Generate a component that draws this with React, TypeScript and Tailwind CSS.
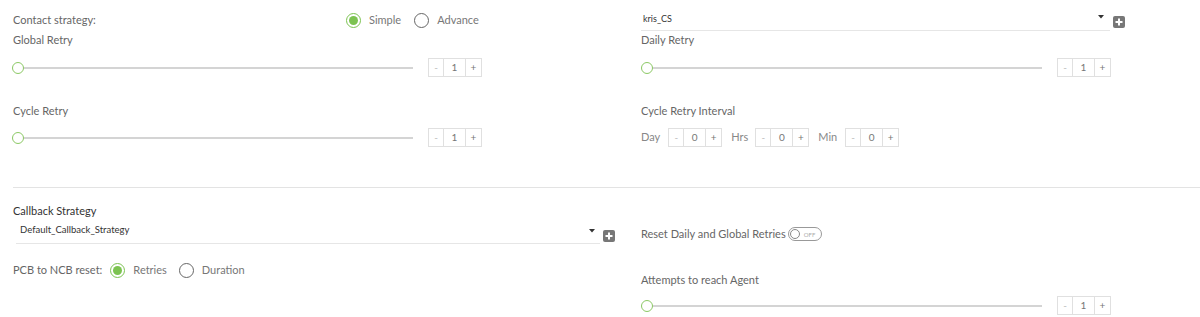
import React from "react";

const font = { fontFamily: "Lato, 'Open Sans', sans-serif" };

function Radio({ checked, label }: { checked?: boolean; label: string }) {
  return (
    <div className="flex items-center">
      <span
        className={`flex h-[15px] w-[15px] items-center justify-center rounded-full border-[1.5px] ${
          checked ? "border-[#7cc351]" : "border-[#666]"
        }`}
      >
        {checked && <span className="h-[9px] w-[9px] rounded-full bg-[#7cc351]" />}
      </span>
      <span className="ml-[8px] text-[11px] text-[#777]">{label}</span>
    </div>
  );
}

function Stepper({ value }: { value: number }) {
  return (
    <div className="flex h-[19px] w-[54px] border border-[#e0e0e0] text-[10px] text-[#777]">
      <span className="flex w-[15px] items-center justify-center border-r border-[#e0e0e0] text-[#bbb]">-</span>
      <span className="flex flex-1 items-center justify-center border-r border-[#e0e0e0]">{value}</span>
      <span className="flex w-[15px] items-center justify-center">+</span>
    </div>
  );
}

function Slider({ value = 1 }: { value?: number }) {
  return (
    <div className="flex h-[19px] items-center">
      <div className="relative flex h-[19px] w-[401px] items-center">
        <div className="h-[2px] w-full bg-[#d4d4d4]" />
        <span className="absolute left-0 top-[3.5px] h-[12px] w-[12px] rounded-full border-[1.5px] border-[#8cc965] bg-white" />
      </div>
      <div className="ml-[15px]">
        <Stepper value={value} />
      </div>
    </div>
  );
}

function PlusBox() {
  return (
    <span className="flex h-[12px] w-[12px] items-center justify-center rounded-[2px] bg-[#777]">
      <svg width="8" height="8" viewBox="0 0 8 8">
        <rect x="3" y="0.5" width="2" height="7" fill="#fff" />
        <rect x="0.5" y="3" width="7" height="2" fill="#fff" />
      </svg>
    </span>
  );
}

function Caret() {
  return (
    <svg width="6" height="4" viewBox="0 0 6 4">
      <path d="M0 0 L6 0 L3 3.5 Z" fill="#333" />
    </svg>
  );
}

function Label({ children, dark }: { children: React.ReactNode; dark?: boolean }) {
  return (
    <div className={`flex h-[20px] items-center text-[11px] ${dark ? "text-[#333]" : "text-[#666]"}`}>
      {children}
    </div>
  );
}

export default function App() {
  return (
    <div className="h-[317px] w-[1200px] overflow-hidden bg-white" style={font}>
      <div className="flex pt-[10px]">
        <div className="w-[641px] pl-[12px]">
          <div className="flex h-[20px] items-center">
            <div className="w-[334px] pl-[1px] text-[11px] text-[#666]">Contact strategy:</div>
            <Radio checked label="Simple" />
            <div className="ml-[13px]">
              <Radio label="Advance" />
            </div>
          </div>
          <div className="pl-[1px]">
            <Label>Global Retry</Label>
          </div>
          <div className="mt-[8px]">
            <Slider />
          </div>
          <div className="mt-[24px] pl-[1px]">
            <Label>Cycle Retry</Label>
          </div>
          <div className="mt-[7px]">
            <Slider />
          </div>
        </div>
        <div className="flex-1">
          <div className="flex h-[20px] items-start">
            <div className="flex h-[21px] w-[469px] items-start justify-between border-b border-[#e6e6e6] pl-[2px] pr-[6px] pt-[2px]">
              <span className="text-[9px] text-[#333]">kris_CS</span>
              <span className="pt-[3px]">
                <Caret />
              </span>
            </div>
            <span className="ml-[3px] mt-[6px]">
              <PlusBox />
            </span>
          </div>
          <Label>Daily Retry</Label>
          <div className="mt-[8px]">
            <Slider />
          </div>
          <div className="mt-[24px]">
            <Label>Cycle Retry Interval</Label>
          </div>
          <div className="mt-[7px] flex h-[19px] items-center text-[11px] text-[#888]">
            <span>Day</span>
            <span className="ml-[8px]">
              <Stepper value={0} />
            </span>
            <span className="ml-[9px]">Hrs</span>
            <span className="ml-[7px]">
              <Stepper value={0} />
            </span>
            <span className="ml-[9px]">Min</span>
            <span className="ml-[8px]">
              <Stepper value={0} />
            </span>
          </div>
        </div>
      </div>

      <div className="ml-[13px] mt-[40px] h-[1px] bg-[#e3e3e3]" />

      <div className="flex">
        <div className="w-[641px] pl-[12px]">
          <div className="mt-[13px] pl-[1px]">
            <Label dark>Callback Strategy</Label>
          </div>
          <div className="flex items-start">
            <div className="ml-[4px] flex h-[23px] w-[584px] items-center justify-between border-b border-[#e6e6e6] pb-[3px] pl-[4px] pr-[5px]">
              <span className="text-[9.5px] text-[#333]">Default_Callback_Strategy</span>
              <Caret />
            </div>
            <span className="ml-[3px] mt-[9px]">
              <PlusBox />
            </span>
          </div>
          <div className="mt-[16px] flex h-[20px] items-center pl-[1px]">
            <span className="text-[11px] text-[#666]">PCB to NCB reset:</span>
            <div className="ml-[8px]">
              <Radio checked label="Retries" />
            </div>
            <div className="ml-[12px]">
              <Radio label="Duration" />
            </div>
          </div>
        </div>
        <div className="flex-1">
          <div className="mt-[36px] flex h-[20px] items-center">
            <span className="text-[11px] text-[#666]">Reset Daily and Global Retries</span>
            <span className="ml-[2px] flex h-[14px] w-[34px] items-center rounded-full border border-[#999] px-[1px]">
              <span className="h-[10px] w-[10px] rounded-full border border-[#888] bg-white" />
              <span className="ml-[4px] text-[6px] text-[#aaa]">OFF</span>
            </span>
          </div>
          <div className="mt-[26px]">
            <Label>Attempts to reach Agent</Label>
          </div>
          <div className="mt-[6px]">
            <Slider />
          </div>
        </div>
      </div>
    </div>
  );
}
